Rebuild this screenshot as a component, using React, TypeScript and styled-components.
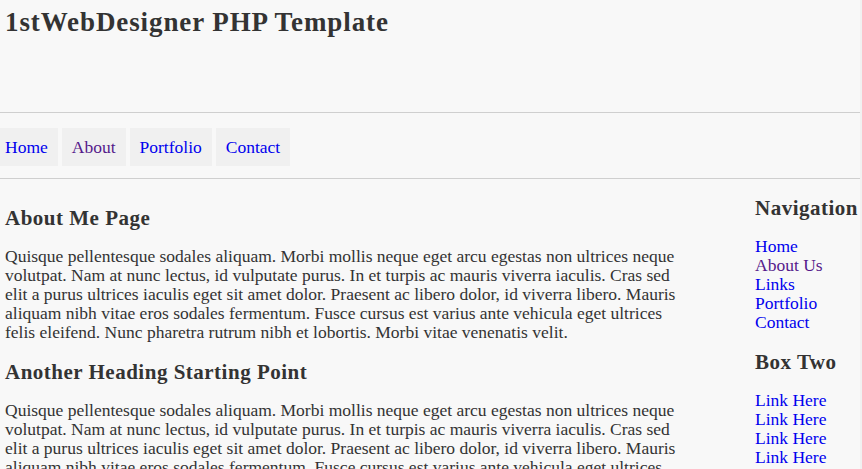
import React from 'react';
import styled, { createGlobalStyle } from 'styled-components';

const GlobalStyle = createGlobalStyle`
  html, body {
    margin: 0;
    padding: 0;
    background: #f1f1f1;
  }
  body {
    font-family: "Liberation Serif", "Times New Roman", serif;
    color: #333;
  }
  #root {
    overflow: hidden;
  }
`;

const lorem =
  'Quisque pellentesque sodales aliquam. Morbi mollis neque eget arcu egestas non ultrices neque volutpat. Nam at nunc lectus, id vulputate purus. In et turpis ac mauris viverra iaculis. Cras sed elit a purus ultrices iaculis eget sit amet dolor. Praesent ac libero dolor, id viverra libero. Mauris aliquam nibh vitae eros sodales fermentum. Fusce cursus est varius ante vehicula eget ultrices felis eleifend. Nunc pharetra rutrum nibh et lobortis. Morbi vitae venenatis velit.';

const menu = [
  { label: 'Home', visited: false },
  { label: 'About', visited: true },
  { label: 'Portfolio', visited: false },
  { label: 'Contact', visited: false },
];

const sideNav = [
  { label: 'Home', visited: false },
  { label: 'About Us', visited: true },
  { label: 'Links', visited: false },
  { label: 'Portfolio', visited: false },
  { label: 'Contact', visited: false },
];

function App() {
  return (
    <>
      <GlobalStyle />
      <Page>
        <Header>
          <Title>1stWebDesigner PHP Template</Title>
        </Header>
        <Menu>
          {menu.map((m, i) => (
            <MenuItem key={m.label} first={i === 0}>
              <Link href="#" visited={m.visited}>{m.label}</Link>
            </MenuItem>
          ))}
        </Menu>
        <Content>
          <Main>
            <Heading>About Me Page</Heading>
            <Text>{lorem}</Text>
            <Heading>Another Heading Starting Point</Heading>
            <Text>{lorem}</Text>
          </Main>
          <Sidebar>
            <SideHeading>Navigation</SideHeading>
            <LinkList>
              {sideNav.map((l) => (
                <li key={l.label}>
                  <Link href="#" visited={l.visited}>{l.label}</Link>
                </li>
              ))}
            </LinkList>
            <SideHeading>Box Two</SideHeading>
            <LinkList>
              {[1, 2, 3, 4, 5].map((n) => (
                <li key={n}>
                  <Link href="#">Link Here</Link>
                </li>
              ))}
            </LinkList>
          </Sidebar>
        </Content>
      </Page>
    </>
  );
}

const Page = styled.div`
  width: 860px;
  background: #f8f8f8;
  font-size: 17.5px;
`;

const Header = styled.div`
  padding: 0 5px;
  border-bottom: 1px solid #cfcfcf;
  box-sizing: border-box;
  height: 113px;
`;

const Title = styled.h1`
  margin: 0;
  padding-top: 7px;
  font-size: 27px;
  letter-spacing: 0.9px;
  line-height: 30px;
  font-weight: bold;
  color: #333;
`;

const Menu = styled.ul`
  display: flex;
  gap: 4px;
  list-style: none;
  margin: 0;
  padding: 15px 0 12px;
  border-bottom: 1px solid #cfcfcf;
`;

const MenuItem = styled.li<{ first?: boolean }>`
  background: #f0f0f0;
  padding: 10px 10px 10px ${(p) => (p.first ? '5px' : '10px')};
  line-height: 18px;
`;

const Link = styled.a<{ visited?: boolean }>`
  color: ${(p) => (p.visited ? '#551a8b' : '#0000ee')};
  text-decoration: none;
`;

const Content = styled.div`
  display: grid;
  grid-template-columns: 680px 105px;
  column-gap: 70px;
  padding-left: 5px;
`;

const Main = styled.div``;

const Heading = styled.h2`
  margin: 28px 0 18px;
  font-size: 21px;
  letter-spacing: 0.5px;
  line-height: 22px;
  font-weight: bold;
  color: #333;
  & ~ & {
    margin-top: 19px;
  }
`;

const Text = styled.p`
  margin: 0;
  line-height: 19px;
`;

const Sidebar = styled.div`
  white-space: nowrap;
`;

const SideHeading = styled.h2`
  margin: 18px 0 18px;
  font-size: 21px;
  letter-spacing: 0.5px;
  line-height: 22px;
  font-weight: bold;
  color: #333;
  & ~ & {
    margin-top: 19px;
  }
`;

const LinkList = styled.ul`
  list-style: none;
  margin: 0;
  padding: 0;
  line-height: 19px;
`;

export default App;
